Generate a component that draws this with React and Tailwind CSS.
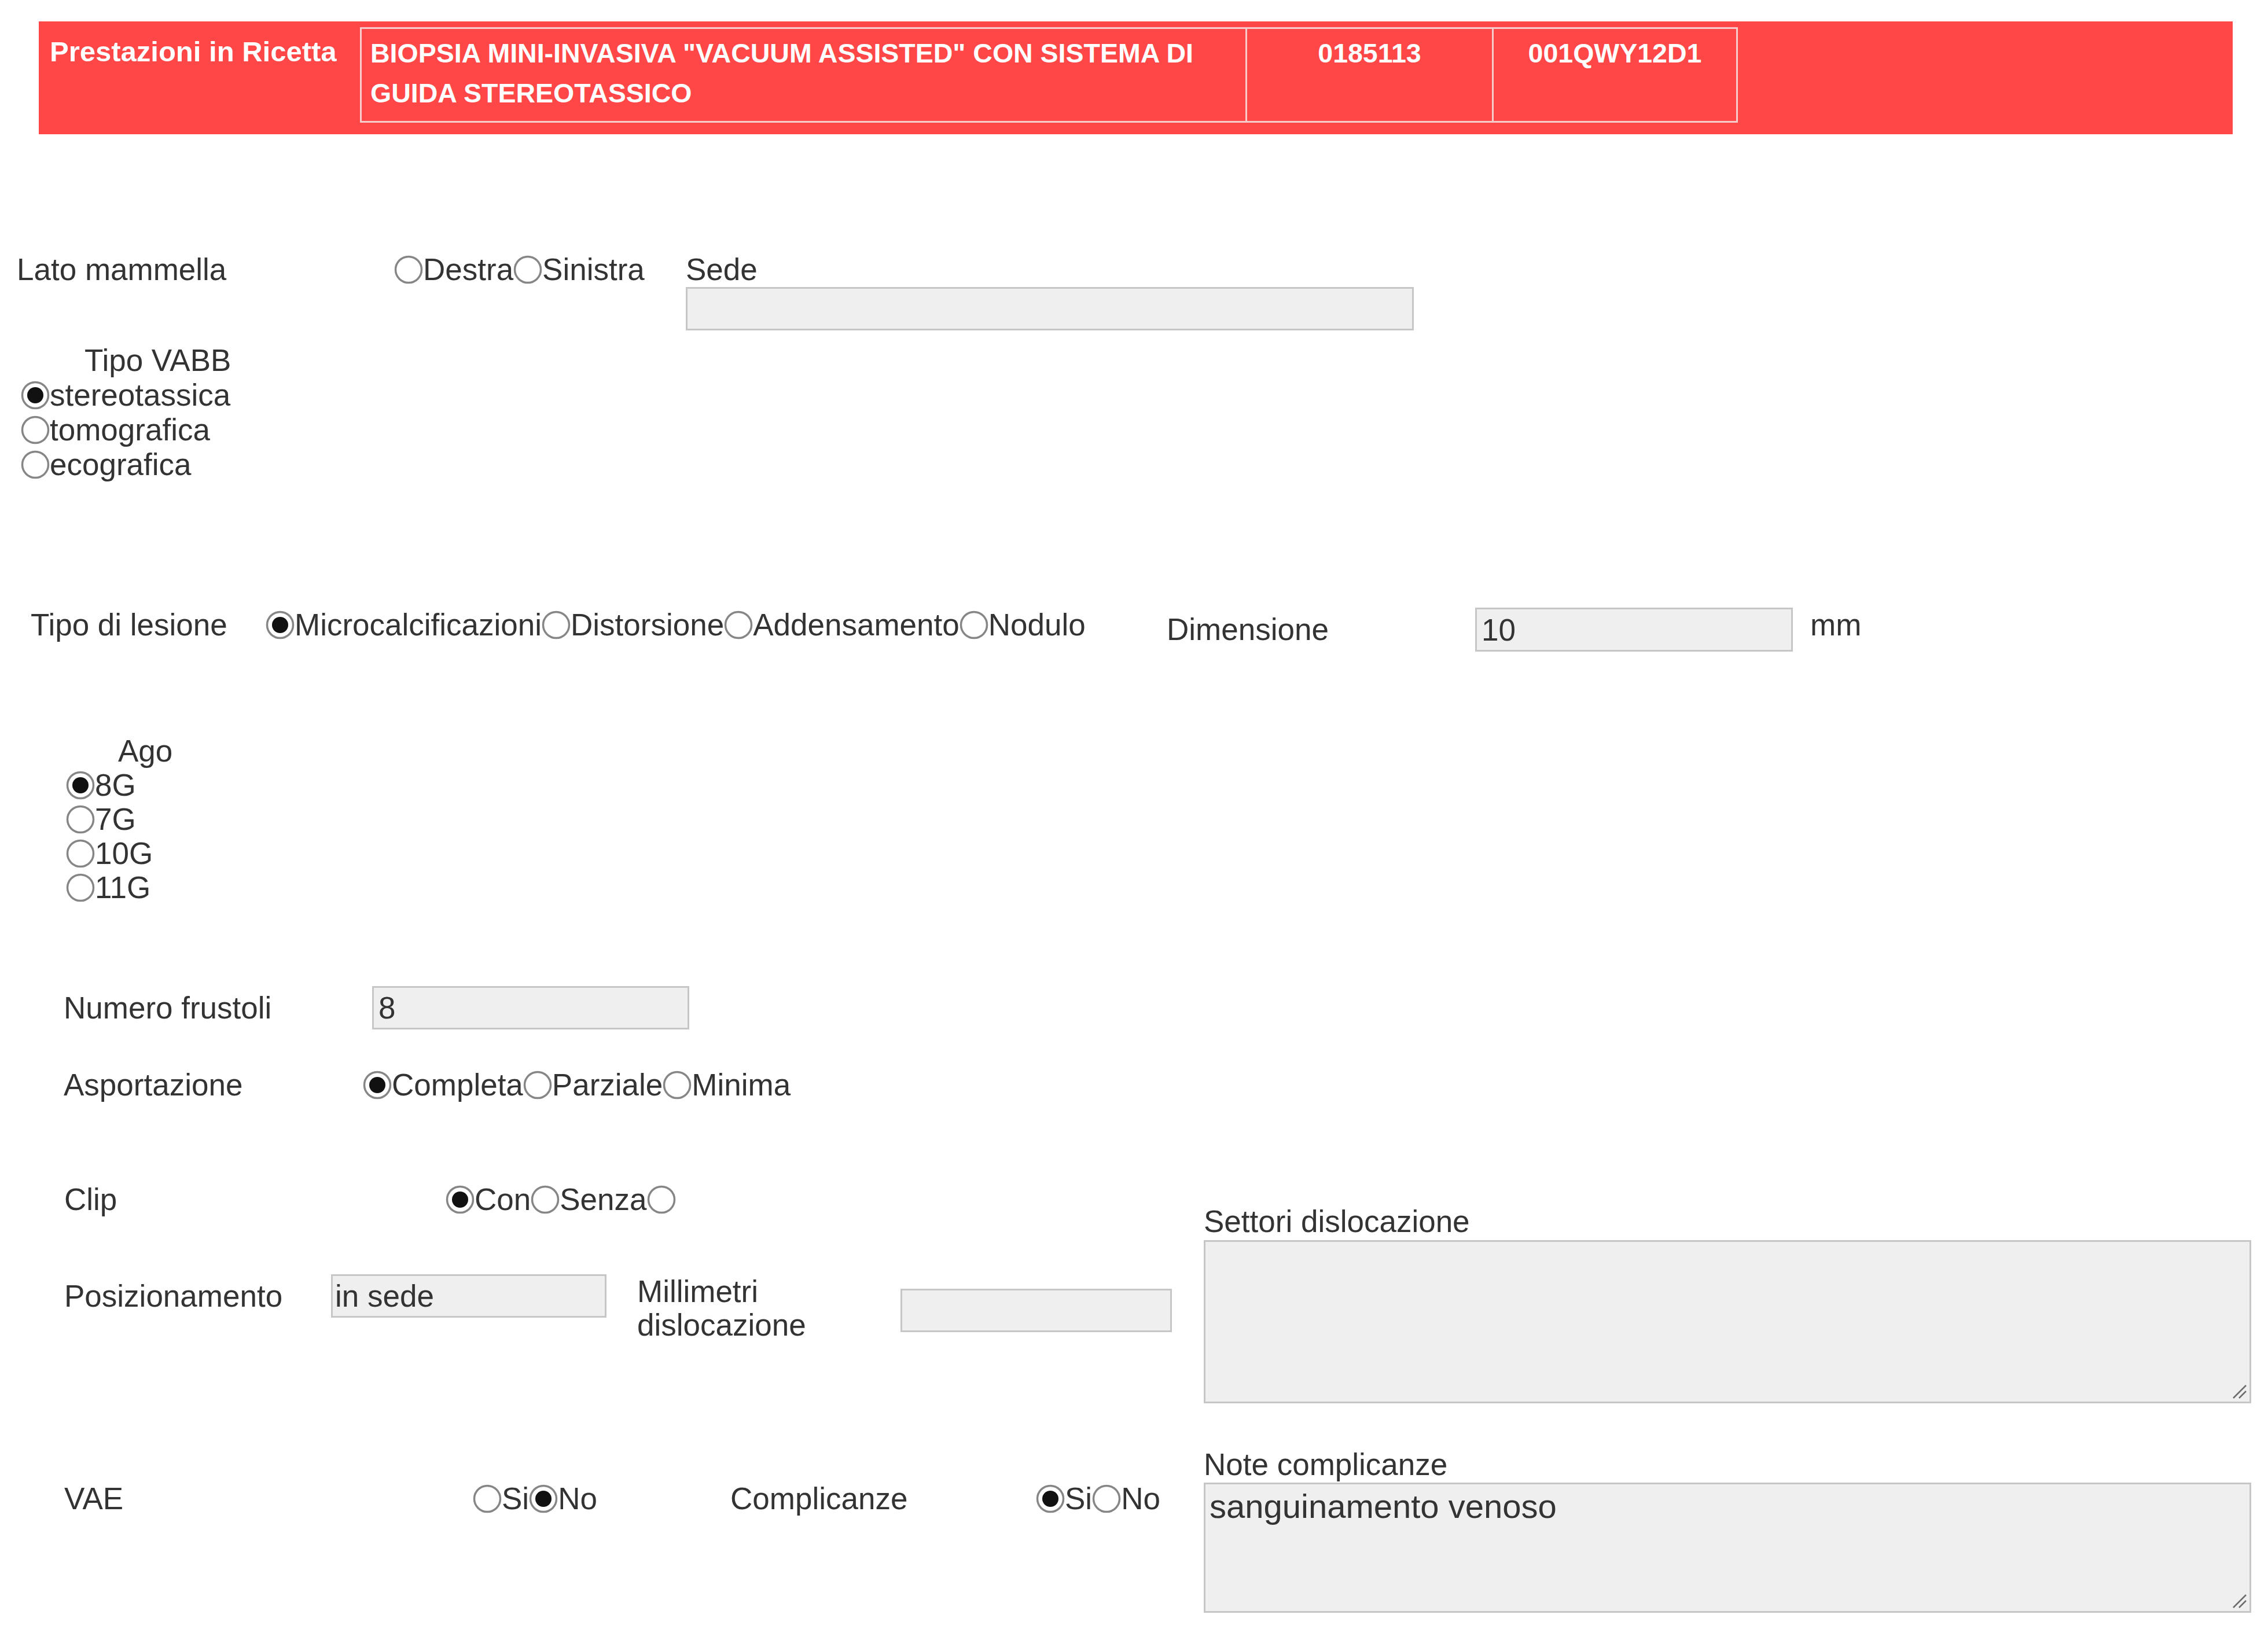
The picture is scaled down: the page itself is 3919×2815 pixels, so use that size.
import React from "react";

const field = "border-[3px] border-[#c6c6c6] bg-[#efefef] outline-none";

function Radio({ checked }) {
  return (
    <svg width="50" height="50" viewBox="0 0 50 50" className="shrink-0">
      <circle cx="25" cy="25" r="22.5" fill="white" stroke="#868686" strokeWidth="3.5" />
      {checked && <circle cx="25" cy="25" r="14" fill="#111" />}
    </svg>
  );
}

function Option({ checked, label }) {
  return (
    <span className="flex items-center">
      <Radio checked={checked} />
      {label && <span>{label}</span>}
    </span>
  );
}

function Resizer() {
  return (
    <svg width="30" height="30" viewBox="0 0 30 30" className="absolute right-[4px] bottom-[4px]">
      <line x1="28" y1="6" x2="6" y2="28" stroke="#6b6b6b" strokeWidth="2.5" />
      <line x1="28" y1="16" x2="16" y2="28" stroke="#6b6b6b" strokeWidth="2.5" />
    </svg>
  );
}

export default function App() {
  return (
    <div className="min-h-[2815px] w-[3919px] bg-white font-['Liberation_Sans',Arial,sans-serif] text-[53px] leading-[60px] text-[#333]">
      {/* Header band */}
      <div className="pt-[37px] pl-[67px] pr-[61px]">
        <div className="flex h-[195px] items-start bg-[#ff4747] font-bold text-white">
          <div className="w-[555px] pt-[22px] pl-[19px] text-[49px] leading-[60px]">Prestazioni in Ricetta</div>
          <div className="mt-[10px] flex h-[165px] border-[3px] border-[#f6cccc] text-[46.5px] leading-[69px]">
            <div className="w-[1527px] pt-[8px] pr-[20px] pl-[15px]">
              BIOPSIA MINI-INVASIVA "VACUUM ASSISTED" CON SISTEMA DI GUIDA STEREOTASSICO
            </div>
            <div className="w-[426px] border-l-[3px] border-[#f6cccc] pt-[8px] text-center">0185113</div>
            <div className="w-[422px] border-l-[3px] border-[#f6cccc] pt-[8px] text-center">001QWY12D1</div>
          </div>
        </div>
      </div>

      {/* Lato mammella */}
      <div className="mt-[204px] flex items-start">
        <div className="w-[681px] pl-[29px]">Lato mammella</div>
        <div className="flex w-[504px]">
          <Option label="Destra" />
          <Option label="Sinistra" />
        </div>
        <div className="flex flex-col">
          <span>Sede</span>
          <div className={`h-[75px] w-[1258px] ${field}`} />
        </div>
      </div>

      {/* Tipo VABB */}
      <div className="mt-[22px] flex flex-col items-start pl-[36px]">
        <div className="pl-[110px]">Tipo VABB</div>
        <Option checked label="stereotassica" />
        <Option label="tomografica" />
        <Option label="ecografica" />
      </div>

      {/* Tipo di lesione */}
      <div className="mt-[217px] flex items-start">
        <div className="w-[459px] pl-[53px]">Tipo di lesione</div>
        <div className="flex w-[1557px]">
          <Option checked label="Microcalcificazioni" />
          <Option label="Distorsione" />
          <Option label="Addensamento" />
          <Option label="Nodulo" />
        </div>
        <div className="w-[533px] pt-[8px]">Dimensione</div>
        <input readOnly value="10" className={`h-[76px] w-[549px] pl-[8px] text-[#333] ${field}`} />
        <div className="pl-[30px]">mm</div>
      </div>

      {/* Ago */}
      <div className="mt-[142px] flex flex-col items-start pl-[114px] leading-[59px]">
        <div className="pl-[90px]">Ago</div>
        <Option checked label="8G" />
        <Option label="7G" />
        <Option label="10G" />
        <Option label="11G" />
      </div>

      {/* Numero frustoli */}
      <div className="mt-[141px] flex items-center">
        <div className="w-[643px] pl-[110px]">Numero frustoli</div>
        <input readOnly value="8" className={`h-[75px] w-[548px] pl-[8px] text-[#333] ${field}`} />
      </div>

      {/* Asportazione */}
      <div className="mt-[66px] flex items-start">
        <div className="w-[627px] pl-[110px]">Asportazione</div>
        <div className="flex">
          <Option checked label="Completa" />
          <Option label="Parziale" />
          <Option label="Minima" />
        </div>
      </div>

      {/* Clip / Posizionamento / Settori */}
      <div className="mt-[138px] flex items-start pl-[111px]">
        <div className="w-[1969px]">
          <div className="flex">
            <div className="w-[659px]">Clip</div>
            <div className="flex">
              <Option checked label="Con" />
              <Option label="Senza" />
              <Option />
            </div>
          </div>
          <div className="mt-[99px] flex items-start">
            <div className="w-[461px] pt-[8px]">Posizionamento</div>
            <input readOnly value="in sede" className={`h-[75px] w-[476px] pl-[4px] text-[#333] ${field}`} />
            <div className="ml-[53px] flex w-[455px] flex-col pt-[1px] leading-[58px]">
              <span>Millimetri</span>
              <span>dislocazione</span>
            </div>
            <div className={`mt-[25px] h-[75px] w-[469px] ${field}`} />
          </div>
        </div>
        <div className="flex w-[1810px] flex-col pt-[38px]">
          <span>Settori dislocazione</span>
          <div className={`relative mt-[2px] h-[282px] w-[1810px] ${field}`}>
            <Resizer />
          </div>
        </div>
      </div>

      {/* VAE / Complicanze / Note */}
      <div className="mt-[76px] flex items-start pl-[111px]">
        <div className="flex w-[1969px] pt-[59px]">
          <div className="w-[706px]">VAE</div>
          <div className="flex w-[445px]">
            <Option label="Si" />
            <Option checked label="No" />
          </div>
          <div className="w-[528px]">Complicanze</div>
          <div className="flex">
            <Option checked label="Si" />
            <Option label="No" />
          </div>
        </div>
        <div className="flex w-[1810px] flex-col">
          <span>Note complicanze</span>
          <div className={`relative mt-[1px] h-[225px] w-[1810px] pt-[5px] pl-[7px] text-[58px] leading-[66px] ${field}`}>
            sanguinamento venoso
            <Resizer />
          </div>
        </div>
      </div>
    </div>
  );
}
